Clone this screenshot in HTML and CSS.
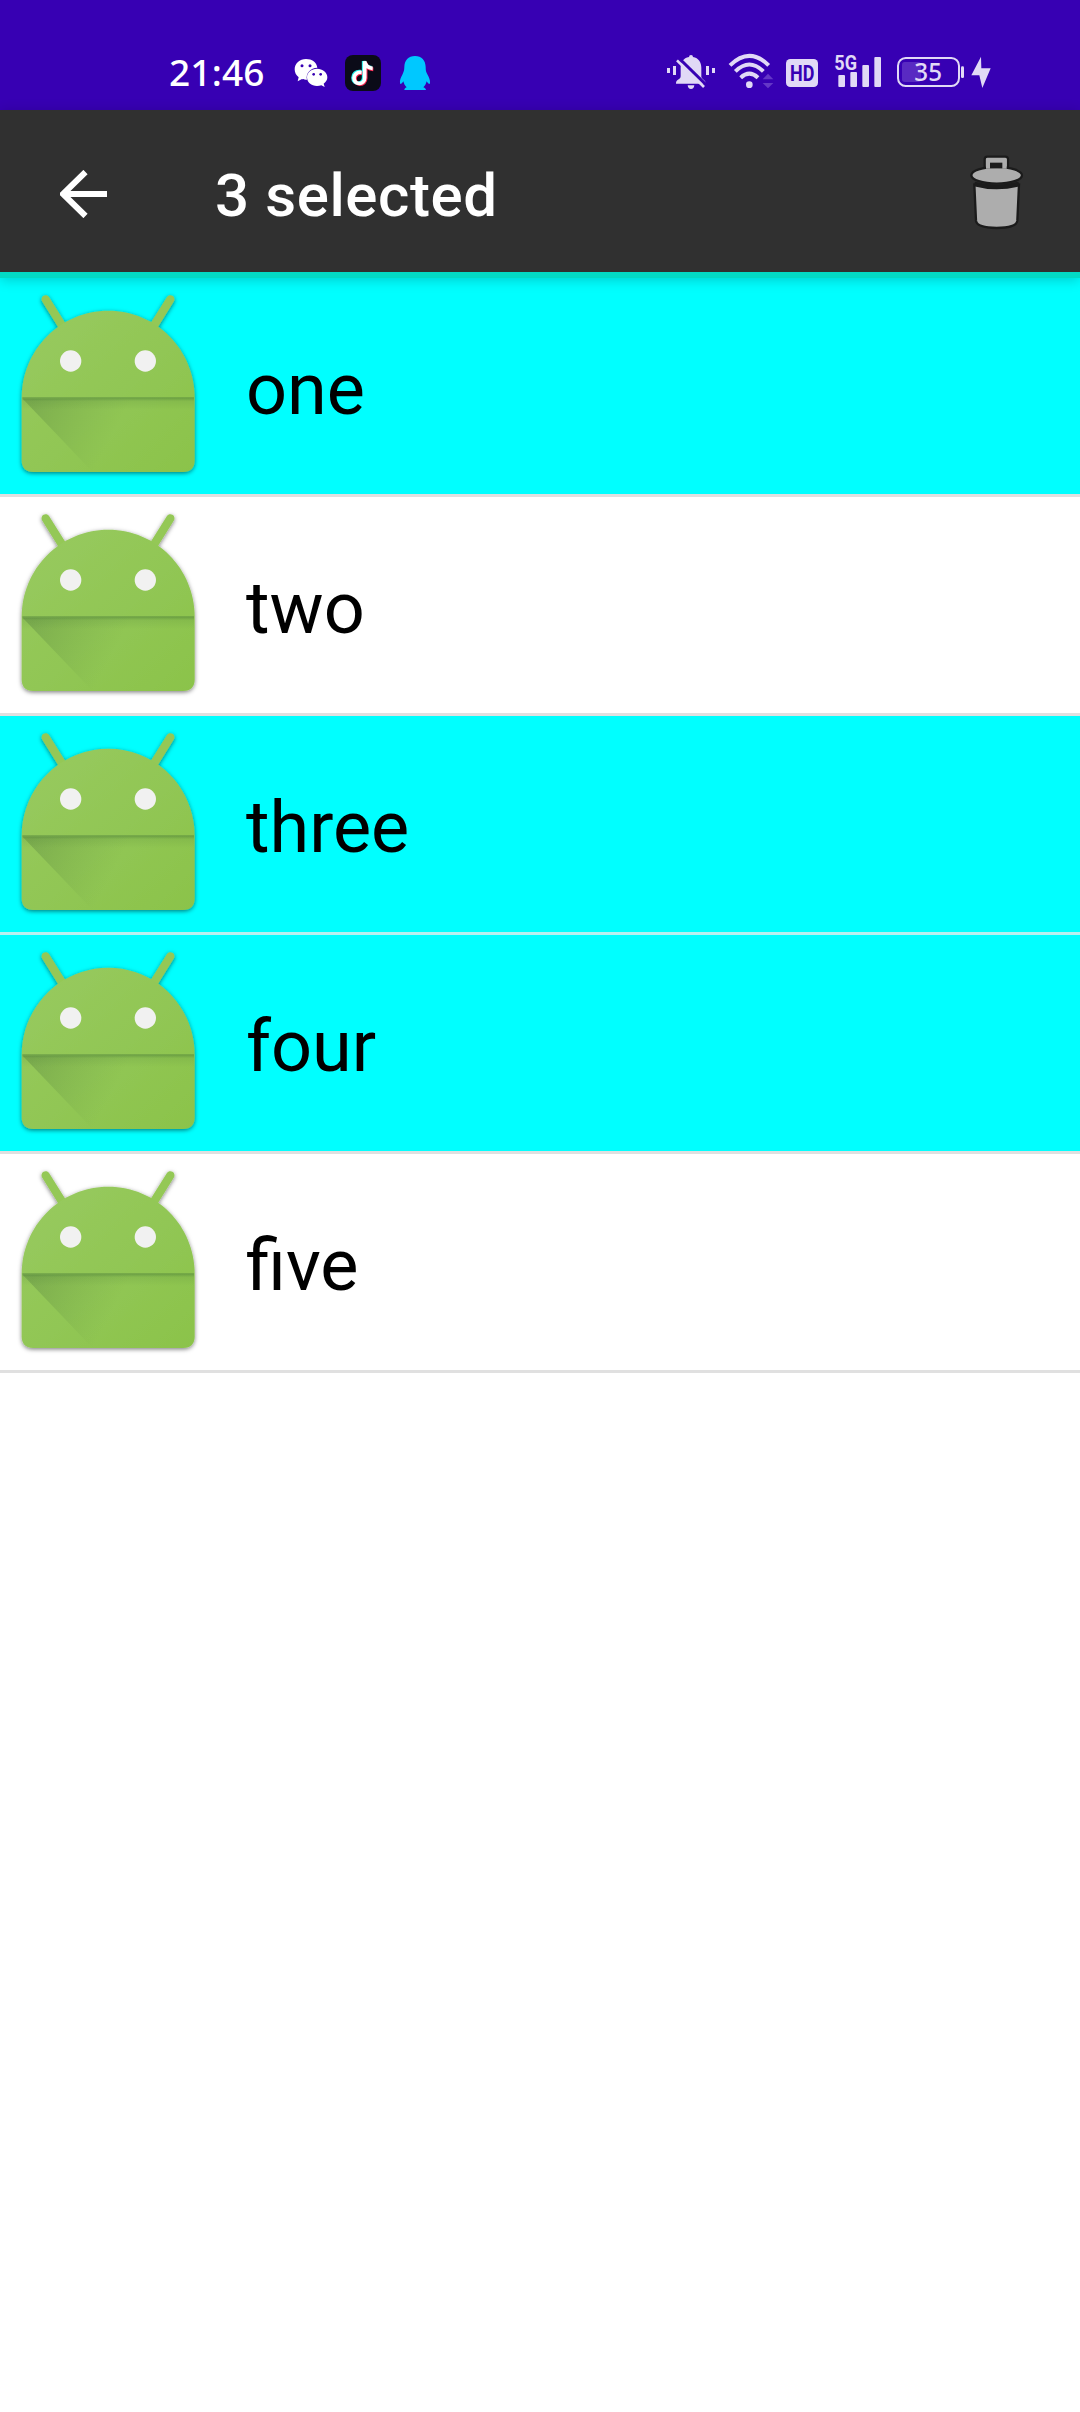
FILE: index.html
```html
<!DOCTYPE html>
<html lang="en">
<head>
<meta charset="utf-8">
<title>List</title>
<link rel="stylesheet" href="styles.css">
</head>
<body>
<svg class="defs" aria-hidden="true">
  <defs>
    <linearGradient id="body" x1="0" y1="0" x2="1" y2="1"><stop offset="0" stop-color="#98ca60"/><stop offset="1" stop-color="#8bc34a"/></linearGradient>
    <linearGradient id="cast" gradientUnits="userSpaceOnUse" x1="100" y1="390" x2="330" y2="510"><stop offset="0" stop-color="#4f7a3c" stop-opacity=".34"/><stop offset="1" stop-color="#5f8f3e" stop-opacity="0"/></linearGradient>
    <linearGradient id="fold" x1="0" y1="0" x2="0" y2="1"><stop offset="0" stop-color="#3f7033" stop-opacity=".5"/><stop offset=".3" stop-color="#3f7033" stop-opacity=".12"/><stop offset="1" stop-color="#3f7033" stop-opacity="0"/></linearGradient>
    <filter id="soft" x="-5%" y="-5%" width="110%" height="112%"><feDropShadow dx="0" dy="4" stdDeviation="6" flood-color="#000" flood-opacity=".5"/></filter>
    <symbol id="robot" viewBox="0 24 648 648">
      <g filter="url(#soft)">
        <path d="M137 88L185 165M511 88L463 165" stroke="#94c856" stroke-width="25" stroke-linecap="round"/>
        <path d="M65 384C65 240 180 122 325 122S584 240 584 384V571Q584 606 549 606H100Q65 606 65 571Z" fill="url(#body)"/>
      </g>
      <path d="M68 386H581V450L440 604H276Z" fill="url(#cast)"/>
      <rect x="67" y="382" width="515" height="38" fill="url(#fold)"/>
      <circle cx="212" cy="273" r="32" fill="#f1f1f1"/><circle cx="436" cy="273" r="32" fill="#f1f1f1"/>
    </symbol>
  </defs>
</svg>
<header class="status">
  <span class="time">21:46</span>
  <svg class="wechat" viewBox="429 0 108 210">
    <path fill="#fff" d="M468 57c-19 0-34 13-34 31 0 10 4 18 12 24l-3 12 13-7c5 2 10 2 15 2-5-19 11-36 31-36-2-16-16-26-34-26z"/>
    <path fill="#fff" d="M501 86c-17 0-30 11-30 26s13 26 30 26c5 0 9-1 13-2l10 5-3-10c7-5 11-11 11-19 0-15-14-26-31-26z"/>
    <g fill="#3700b3"><circle cx="456" cy="77" r="4.500"/><circle cx="480" cy="77" r="4.500"/><circle cx="491" cy="103" r="4"/><circle cx="512" cy="103" r="4"/></g>
  </svg>
  <svg class="tiktok" viewBox="585 0 108 210">
    <rect x="585" y="45" width="108" height="108" rx="24" fill="#0b0b18"/>
    <g fill="none" stroke-width="11">
      <path stroke="#25f4ee" d="M632 95c-15-2-23 8-23 18 0 22 32 22 32-1V63c2 13 9 19 23 20"/>
      <path stroke="#fe2c55" d="M637 100c-15-2-22 7-22 16 0 22 32 22 32-1V68c2 13 9 19 23 20"/>
      <path stroke="#fff" d="M635 97c-15-2-23 8-23 17 0 22 32 22 32-1V64c2 14 10 20 24 21"/>
    </g>
  </svg>
  <svg class="qq" viewBox="747 0 96 210">
    <path fill="#00c8ff" d="M795 48c-20 0-32 14-32 33 0 10-2 15-6 23-5 9-8 17-7 25 1 5 4 4 10-5 2 8 5 13 10 18-5 2-7 5-7 8h65c0-3-3-6-8-8 5-5 8-10 10-18 6 9 9 10 10 5 1-8-3-17-8-26-4-8-5-12-5-22 0-19-12-33-32-33z"/>
  </svg>
  <span class="spacer"></span>
  <svg class="bell" viewBox="48 0 150 210" fill="#e1d9f6">
    <path d="M117 51q0-6 6-6t6 6c17 3 25 16 25 32v27q0 4 5 8c7 5 8 8 8 13H78c0-6 1-8 8-13 5-4 6-6 6-11V83c0-16 8-29 25-32zM113 136h20q-1 11-10 11t-10-11z"/>
    <path d="M51 84h9v15h-9zM69 78h9v27h-9zM168 78h9v27h-9zM186 84h9v15h-9z"/>
    <path d="M88 56L170 136" stroke="#3700b3" stroke-width="9"/><path d="M81 61L162 141" stroke="#e1d9f6" stroke-width="8"/>
  </svg>
  <svg class="wifi" viewBox="234 0 138 210" fill="none" stroke="#e1d9f6" stroke-width="12">
    <path d="M240 76Q298 19 356 76M256 94Q298 53 340 94M272 113Q298 89 324 113"/><circle cx="298" cy="134" r="10" fill="#e1d9f6" stroke="none"/>
    <path d="M338 118L354 101L370 118ZM338 129H370L354 145Z" fill="#6437c7" stroke="none"/>
  </svg>
  <svg class="hd" viewBox="405 0 102 210">
    <rect x="408" y="57" width="96" height="84" rx="13" fill="#e1d9f6"/><text x="420" y="122" textLength="73" lengthAdjust="spacingAndGlyphs" class="hd-text">HD</text>
  </svg>
  <svg class="signal" viewBox="42 0 144 210" fill="#e1d9f6">
    <text x="43" y="91" textLength="68" lengthAdjust="spacingAndGlyphs" class="net-text">5G</text>
    <rect x="55" y="105" width="20" height="36" rx="3"/><rect x="91" y="96" width="20" height="45" rx="3"/><rect x="127" y="75" width="20" height="66" rx="3"/><rect x="163" y="51" width="20" height="90" rx="3"/>
  </svg>
  <svg class="battery" viewBox="228 0 207 210">
    <rect x="246" y="66" width="57" height="60" rx="8" fill="#592ac2"/><rect x="234" y="54" width="183" height="84" rx="23" fill="none" stroke="#e1d9f6" stroke-width="6"/><rect x="423" y="79" width="9" height="35" rx="4" fill="#e1d9f6"/>
    <text x="283" y="123" textLength="83" lengthAdjust="spacingAndGlyphs" class="pct-text">35</text>
  </svg>
  <svg class="bolt" viewBox="450 0 66 210"><path fill="#e1d9f6" d="M483 50L454 106H478L487 144L512 85H484Z"/></svg>
</header>
<nav class="bar">
  <svg class="back" viewBox="0 0 48 48"><path d="M25.500 2L3 24L25.500 46M4 24H47" fill="none" stroke="#fff" stroke-width="6"/></svg>
  <h1 class="title">3 selected</h1>
  <svg class="trash" viewBox="87 72 165 228" fill="#adadad" stroke="#1b1b1b" stroke-width="7">
    <path d="M103 164Q170 178 237 164L232 272Q230 293 170 294Q110 293 108 272Z"/>
    <path d="M103 162Q170 180 237 162" fill="none" stroke-width="14"/>
    <path d="M134 118V88Q134 80 142 80H196Q204 80 204 88V118Z"/>
    <ellipse cx="170" cy="136" rx="76" ry="25"/>
    <path d="M138 116V89Q138 84 143 84H195Q200 84 200 89V116Z" stroke="none"/>
    <rect x="150" y="98" width="37" height="17" fill="#1b1b1b" stroke="none"/>
  </svg>
</nav>
<ul class="list">
  <li class="row selected"><svg class="robot"><use href="#robot"/></svg><span class="label">one</span></li>
  <li class="row"><svg class="robot"><use href="#robot"/></svg><span class="label">two</span></li>
  <li class="row selected joined"><svg class="robot"><use href="#robot"/></svg><span class="label">three</span></li>
  <li class="row selected"><svg class="robot"><use href="#robot"/></svg><span class="label">four</span></li>
  <li class="row"><svg class="robot"><use href="#robot"/></svg><span class="label">five</span></li>
</ul>
</body>
</html>
```
FILE: styles.css
```css
* { box-sizing: border-box; }
body { margin: 0; min-height: 2412px; background: #fff; font-family: Roboto, "Noto Sans", sans-serif; overflow-x: hidden; }
.defs { width: 0; height: 0; }
svg { display: block; flex: none; }
.status { display: flex; height: 110px; padding: 40px 88px 0 169px; background: #3700b3; }
.status svg { height: 70px; }
.time { width: 124px; font: 500 37px/64px "Noto Sans", sans-serif; letter-spacing: .2px; color: #fff; white-space: nowrap; }
.wechat { width: 36px; margin-right: 16px; }
.tiktok { width: 36px; margin-right: 18px; }
.qq { width: 32px; }
.spacer { flex: 1; }
.bell { width: 50px; margin-right: 12px; }
.wifi { width: 46px; margin-right: 11px; }
.hd { width: 34px; margin-right: 15px; }
.signal { width: 48px; margin-right: 14px; }
.battery { width: 69px; margin-right: 5px; }
.bolt { width: 22px; }
.hd-text { font: 700 64px Roboto, sans-serif; fill: #3700b3; }
.net-text { font: 700 62px Roboto, sans-serif; }
.pct-text { font: 500 74px "Noto Sans", sans-serif; fill: #e1d9f6; }
.bar { display: flex; align-items: flex-start; height: 168px; padding: 0 24px 0 58px; background: #303030; border-bottom: 6px solid #03dac5; box-shadow: 0 2px 12px rgba(0, 0, 0, .2); position: relative; }
.back { width: 48px; height: 48px; margin: 60px 0 0; }
.bar { padding-left: 60px; }
.title { flex: 1; margin: 51px 0 0 107px; font-size: 60px; font-weight: 500; line-height: 70px; letter-spacing: .6px; color: #fff; }
.trash { width: 55px; height: 76px; margin: 44px 32px 0 0; }
.list { margin: 0; padding: 0; list-style: none; }
.row { display: flex; align-items: center; height: 219px; border-bottom: 3px solid #e0e0e0; }
.selected { background: #0ff; }
.joined { border-bottom-color: #b8f0f0; }
.robot { width: 216px; height: 216px; }
.label { margin: 8px 0 0 30px; font-size: 72px; line-height: 84px; color: #000; }
```
